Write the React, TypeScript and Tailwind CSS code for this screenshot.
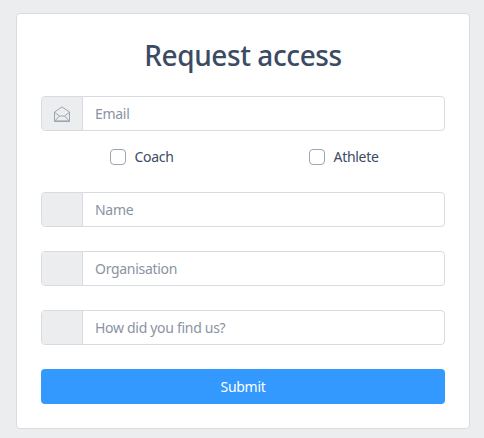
import type { ReactNode } from "react";

function EnvelopeOpenIcon() {
   return (
      <svg
         width="16"
         height="16"
         viewBox="0 0 16 16"
         fill="none"
         stroke="#9da5b1"
         strokeLinejoin="round"
      >
         <path d="M.5 6v9.5h15V6L8 .9z" />
         <path d="M.5 6.2 5.4 10M15.500 6.200 10.600 10M.8 15l4.600-5H10.600l4.600 5" />
         <path d="M1 14.900h14" />
      </svg>
   );
}

type FieldProps = {
   placeholder: string;
   spacing: string;
   icon?: ReactNode;
};

function Field({ placeholder, spacing, icon }: FieldProps) {
   return (
      <div className="flex h-[35px] w-full overflow-hidden rounded border border-[#d8dbe0] bg-white">
         <div className="flex w-[41px] shrink-0 items-center justify-center border-r border-[#d8dbe0] bg-[#ebedef]">
            {icon}
         </div>
         <input
            placeholder={placeholder}
            className={`min-w-0 grow px-3 text-[14px] outline-none placeholder:text-[#8a93a2] ${spacing}`}
         />
      </div>
   );
}

function Checkbox({ label, spacing }: { label: string; spacing: string }) {
   return (
      <label className="flex w-1/2 items-center justify-center">
         <input
            type="checkbox"
            className="mr-2 size-4 appearance-none rounded border border-[#9da5b1] bg-white"
         />
         <span className={`leading-5 ${spacing}`}>{label}</span>
      </label>
   );
}

export default function App() {
   return (
      <div className="h-[438px] bg-[#ebedef] pt-[13px] pr-[14px] pl-4 font-['Noto_Sans',sans-serif] text-[14px] text-[#3c4b64]">
         <div className="h-[416px] rounded border border-[#d8dbe0] bg-white px-6 pt-6">
            <h1 className="mb-[24px] text-center text-[28px] leading-[34px] font-medium tracking-[-0.4px]">
               Request access
            </h1>
            <Field placeholder="Email" spacing="tracking-[-0.3px]" icon={<EnvelopeOpenIcon />} />
            <div className="flex h-[61px] pb-[9px]">
               <Checkbox label="Coach" spacing="tracking-[-0.3px]" />
               <Checkbox label="Athlete" spacing="tracking-[-0.3px]" />
            </div>
            <div className="space-y-6">
               <Field placeholder="Name" spacing="tracking-[-0.3px]" />
               <Field placeholder="Organisation" spacing="tracking-[-0.3px]" />
               <Field placeholder="How did you find us?" spacing="tracking-[-0.3px]" />
               <button className="block h-[35px] w-full rounded bg-[#3399ff] tracking-[-0.3px] text-white">
                  Submit
               </button>
            </div>
         </div>
      </div>
   );
}
